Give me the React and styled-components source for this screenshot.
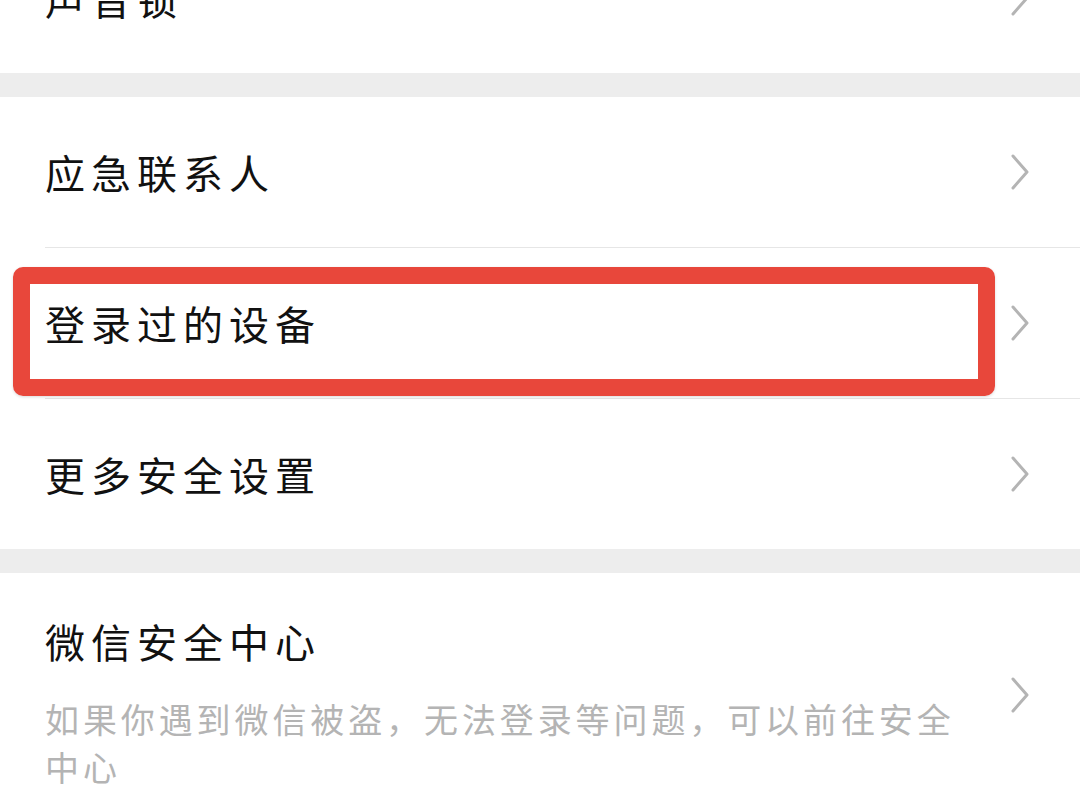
import React from 'react';
import styled, { createGlobalStyle } from 'styled-components';

const GlobalStyle = createGlobalStyle`
  html, body {
    margin: 0;
    padding: 0;
    background: #ededed;
    overflow: hidden;
  }
  body {
    font-family: "Noto Sans CJK SC", "Noto Sans", sans-serif;
  }
`;

const Page = styled.div`
  width: 1080px;
  height: 810px;
  overflow: hidden;
  background: #ededed;
`;

// the list is scrolled: the first row is half above the top edge
const Scroller = styled.div`
  margin-top: -77px;
  display: flex;
  flex-direction: column;
  gap: 24px;
`;

const Section = styled.div`
  background: #fff;
  display: flex;
  flex-direction: column;
`;

const Row = styled.div`
  position: relative;
  height: ${p => (p.tall ? 'auto' : '150px')};
  display: flex;
  align-items: center;
  padding: ${p => (p.tall ? '44px 50px 32px 45px' : '0 50px 0 45px')};
  box-sizing: border-box;
`;

const Body = styled.div`
  flex: 1;
  min-width: 0;
  display: flex;
  flex-direction: column;
`;

const Label = styled.div`
  font-size: 40px;
  line-height: 48px;
  letter-spacing: 6px;
  color: #111;
  white-space: nowrap;
`;

const Desc = styled.div`
  width: 930px;
  margin-top: 30px;
  font-size: 34px;
  line-height: 48px;
  letter-spacing: 3.9px;
  color: #b4b4b4;
`;

const Divider = styled.div`
  height: 1px;
  margin-left: 45px;
  background: #e6e6e6;
`;

const Highlight = styled.div`
  position: absolute;
  left: 13px;
  top: 19px;
  width: 982px;
  height: 129px;
  box-sizing: border-box;
  border: 17px solid #e8473b;
  border-radius: 10px;
  box-shadow: 0 1px 3px rgba(0, 0, 0, 0.15);
  pointer-events: none;
`;

const ChevronSvg = styled.svg`
  flex: none;
  width: 20px;
  height: 38px;
  margin-left: auto;
  margin-bottom: ${p => (p.$raise ? '18px' : '0')};
`;

const Chevron = ({ raise }) => (
  <ChevronSvg viewBox="0 0 20 38" $raise={raise}>
    <path d="M3 3 L17 19 L3 35" fill="none" stroke="#b4b4b4" strokeWidth="3" strokeLinecap="round" strokeLinejoin="round" />
  </ChevronSvg>
);

export default function App() {
  return (
    <Page>
      <GlobalStyle />
      <Scroller>
        <Section>
          <Row>
            <Label>声音锁</Label>
            <Chevron />
          </Row>
        </Section>
        <Section>
          <Row>
            <Label>应急联系人</Label>
            <Chevron />
          </Row>
          <Divider />
          <Row>
            <Label>登录过的设备</Label>
            <Chevron />
            <Highlight />
          </Row>
          <Divider />
          <Row>
            <Label>更多安全设置</Label>
            <Chevron />
          </Row>
        </Section>
        <Section>
          <Row tall>
            <Body>
              <Label>微信安全中心</Label>
              <Desc>如果你遇到微信被盗，无法登录等问题，可以前往安全中心</Desc>
            </Body>
            <Chevron raise />
          </Row>
        </Section>
      </Scroller>
    </Page>
  );
}
